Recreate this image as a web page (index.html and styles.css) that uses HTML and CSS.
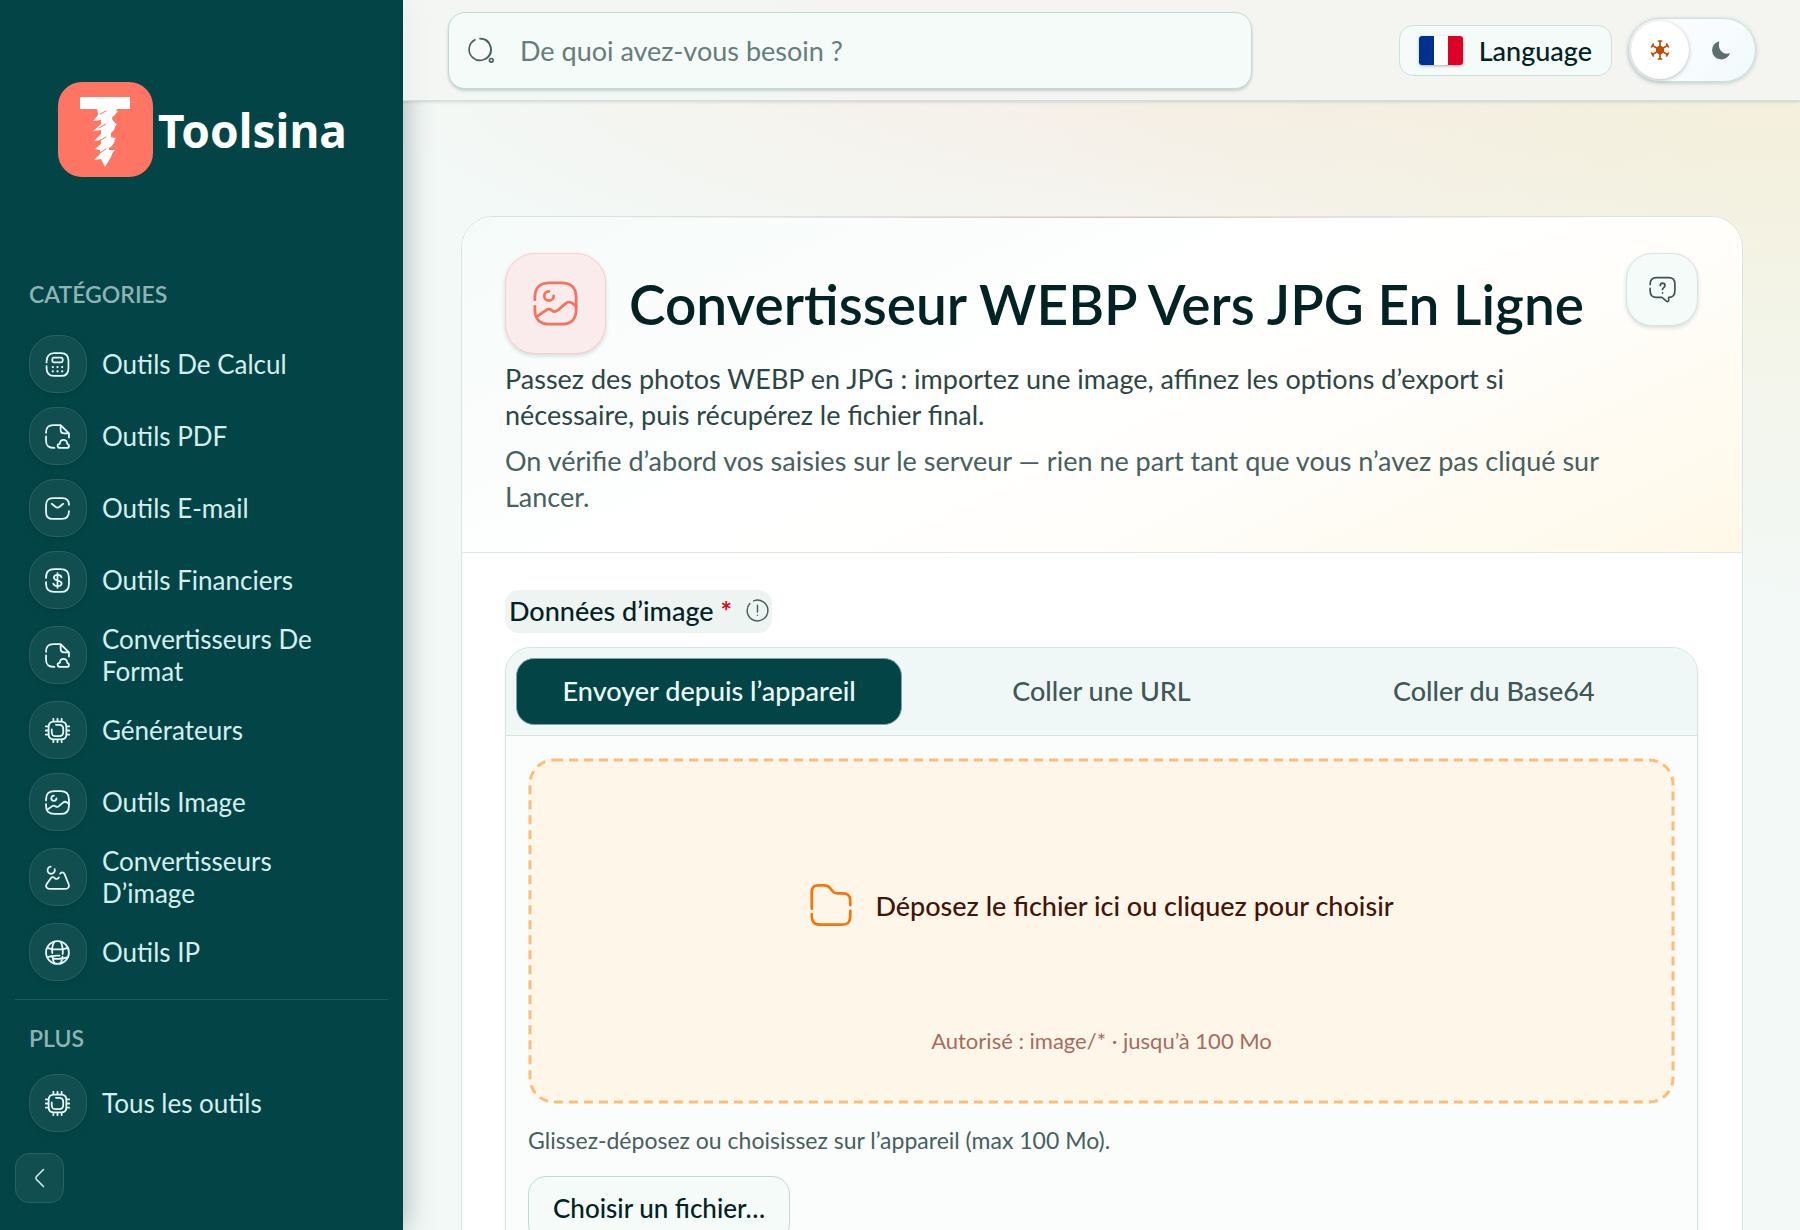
FILE: index.html
```html
<!DOCTYPE html>
<html lang="fr">
<head>
    <meta charset="UTF-8">
    <meta name="viewport" content="width=device-width, initial-scale=1.0">
    <title>Convertisseur WEBP Vers JPG En Ligne - Toolsina</title>
    <link rel="stylesheet" href="styles.css">
</head>
<body>
    <svg class="sprite" aria-hidden="true">
        <symbol id="i-calc" viewBox="0 0 24 24">
            <path d="M1.500 10V9C1.500 4.500 4 1 8.500 1h7c4.500 0 7 3 7 7.500v7c0 4.500-2.500 7.500-7 7.500h-7c-4.500 0-7-3-7-7.500v-2"/>
            <rect x="7" y="5.500" width="10" height="4.500" rx="1.500"/>
            <path stroke-width="2.200" d="M7.500 14.500h.01M12 14.500h.01M16.500 14.500h.01M7.500 18.500h.01M12 18.500h.01M16.500 18.500h.01"/>
        </symbol>
        <symbol id="i-file" viewBox="0 0 24 24">
            <path d="M1 8.500C1 3.500 3 1 8 1h7l8 8v4M15 1v4.500C15 8 16 9 18.500 9H23M1 12v4c0 5 2 7 8 7"/>
            <path d="M14.800 23h6.200c2.500 0 2.800-3.500.300-4-.300-5-7.300-4.800-7 0-3.200 0-2.800 4 .500 4z"/>
        </symbol>
        <symbol id="i-mail" viewBox="0 0 24 24">
            <path d="M23 14.500c0 5-2 7.500-6.500 7.500h-9C3 22 1 19.500 1 15.500V9c0-4.500 2-7 6.500-7h9C21 2 23 4.500 23 8.500M6.500 7.500l3.500 2.800c1.200 1 2.800 1 4 0l3.500-2.800"/>
        </symbol>
        <symbol id="i-money" viewBox="0 0 24 24">
            <path d="M1 9.500C1 3.500 3.500 1 9 1h6c5.500 0 8 2.500 8 8v6c0 5.500-2.500 8-8 8H9c-5.500 0-8-2.500-8-8v-1.500"/>
            <path d="M12 5v14M15.800 9c-.5-3-7.300-3.200-7.300.2 0 3.800 7.500 1.800 7.500 5.600 0 3.500-7.400 3.200-8 .2"/>
        </symbol>
        <symbol id="i-chip" viewBox="0 0 24 24">
            <path d="M8.500 3.500h7c3.500 0 5 1.500 5 5v7c0 3.500-1.500 5-5 5h-7c-3.500 0-5-1.500-5-5v-7c0-3.500 1.500-5 5-5zM8 .8v2.700M12 .8v2.700M16 .8v2.700M8 20.500v2.700M12 20.500v2.700M16 20.500v2.700M.8 8h2.700M.8 12h2.700M.8 16h2.700M20.500 8h2.700M20.500 12h2.700M20.500 16h2.700"/>
            <path d="M10.500 6.500h3c3 0 4 1 4 4v3c0 3-1 4-4 4h-3c-3 0-4-1-4-4V11"/>
        </symbol>
        <symbol id="i-image" viewBox="0 0 24 24">
            <path d="M1 10V9C1 3.500 3.500 1 9 1h6c5.500 0 8 2.500 8 8v6c0 5.500-2.500 8-8 8H9c-5.500 0-8-2.500-8-8v-1.500"/>
            <path d="M8.500 5.500a2.500 2.500 0 1 0 2.500 2.500M2 19l5-3.500c1-.7 2-.6 3 .1 1.200.9 2.300.8 3.300-.1l4-3.400c1.200-1 2.800-1 4 0L23 13.500"/>
        </symbol>
        <symbol id="i-hills" viewBox="0 0 24 24">
            <path d="M5.500 1.500A3.500 3.500 0 1 0 9.300 4"/>
            <path d="M5.800 12.500l-4 5.500C.2 20.500 1.500 23 4.500 23h15c3 0 4.200-2.500 3-5L18.700 8.500c-1-2-3-2-4.200-.2M5.800 12.500c1-1.200 2.500-1 3.500 0 1.500 1.500 3 1 4-.5"/>
        </symbol>
        <symbol id="i-globe" viewBox="0 0 24 24">
            <circle cx="12" cy="12" r="11"/>
            <path d="M9 1.500C7 5 6.500 9 7 12.500M7.200 15.500c.2 2.500.8 5 1.800 7M15 1.500c1.800 3.500 2.300 7.500 2 12M16.800 16c-.3 2.300-.9 4.500-1.800 6.500M2 7.500c5 2 15 2 20 0M2 16.500c4-1.500 8-1.800 12-1.500M22 16.500c-4 1.500-9 2-13 1.500"/>
        </symbol>
    </svg>

    <div class="app">
        <aside class="sidebar">
            <a class="brand" href="#">
                <svg class="brand-mark" viewBox="0 0 95 95" aria-hidden="true">
                    <rect width="95" height="95" rx="24" fill="#ff7564"/>
                    <path fill="#fff" d="M22 15h50v12H59l-1 2-3 3-1 5 4 5-2 6-3 3v5l4 3-3 5-3 2v4l4-1-2 6-6 10-4-8-7 1 6-6v-4l-5-1 6-5v-4l-7 1 7-7v-4l-8 1 8-7v-4l-8 1 5-6 0-2-1-4H22z"/>
                    <path fill="#fff" d="M52 28l8 1-4 5-6 2zM52 41l7 1-5 6-4 1zM51 55l7 1-5 6-4 1zM49 68l8 0-5 6-4 1z"/>
                    <path stroke="#ff7564" stroke-width="1" fill="none" d="M42 32l6-3M41 46l7-4M41 59l7-4M42 71l6-4"/>
                </svg>
                <span>Toolsina</span>
            </a>
            <nav class="nav">
                <h2 class="nav-title">CATÉGORIES</h2>
                <a class="nav-link" href="#"><span class="nav-icon"><svg><use href="#i-calc"/></svg></span>Outils De Calcul</a>
                <a class="nav-link" href="#"><span class="nav-icon"><svg><use href="#i-file"/></svg></span>Outils PDF</a>
                <a class="nav-link" href="#"><span class="nav-icon"><svg><use href="#i-mail"/></svg></span>Outils E-mail</a>
                <a class="nav-link" href="#"><span class="nav-icon"><svg><use href="#i-money"/></svg></span>Outils Financiers</a>
                <a class="nav-link" href="#"><span class="nav-icon"><svg><use href="#i-file"/></svg></span>Convertisseurs De Format</a>
                <a class="nav-link" href="#"><span class="nav-icon"><svg><use href="#i-chip"/></svg></span>Générateurs</a>
                <a class="nav-link" href="#"><span class="nav-icon"><svg><use href="#i-image"/></svg></span>Outils Image</a>
                <a class="nav-link" href="#"><span class="nav-icon"><svg><use href="#i-hills"/></svg></span>Convertisseurs D’image</a>
                <a class="nav-link" href="#"><span class="nav-icon"><svg><use href="#i-globe"/></svg></span>Outils IP</a>
            </nav>
            <nav class="nav nav-more">
                <h2 class="nav-title">PLUS</h2>
                <a class="nav-link" href="#"><span class="nav-icon"><svg><use href="#i-chip"/></svg></span>Tous les outils</a>
            </nav>
            <button class="collapse" type="button" aria-label="Réduire le menu">
                <svg viewBox="0 0 24 24"><path d="M15.500 3.500L8.500 10.500c-.8.800-.8 2.200 0 3l7 7"/></svg>
            </button>
        </aside>

        <div class="main">
            <header class="topbar">
                <label class="search">
                    <svg viewBox="0 0 24 24" aria-hidden="true"><path d="M6.500 2.600A10 10 0 1 0 11 1.500c11 0 13.500 13 6 18.500"/><circle cx="21.500" cy="21.500" r="1.700"/></svg>
                    <input type="search" aria-label="Rechercher un outil" placeholder="De quoi avez-vous besoin ?">
                </label>
                <div class="topbar-actions">
                    <button class="language" type="button">
                        <span class="flag"></span>
                        Language
                    </button>
                    <button class="theme" type="button" aria-label="Changer de thème">
                        <span class="theme-knob">
                            <svg viewBox="0 0 24 24"><circle cx="12" cy="12" r="4"/><path d="M12 12V1.500M12 12v10.500M12 12l9-5.500M12 12L3 6.500M12 12l9 5.500M12 12l-9 5.500M10 1.200h4M10 22.800h4M20 4.800l2 3.500M4 4.800L2 8.300M20 19.200l2-3.500M4 19.200l-2-3.500"/></svg>
                        </span>
                        <span class="theme-moon">
                            <svg viewBox="0 0 24 24"><path d="M10 1.500A11 11 0 1 0 22.800 15.500C16 19 7 12 10 1.500z"/></svg>
                        </span>
                    </button>
                </div>
            </header>

            <main class="content">
                <section class="card">
                    <div class="card-head">
                        <div class="card-title">
                            <span class="tool-icon"><svg><use href="#i-image"/></svg></span>
                            <h1>Convertisseur WEBP Vers JPG En Ligne</h1>
                            <button class="help" type="button" aria-label="Aide">
                                <svg viewBox="0 0 24 24"><path d="M1 7.500C1 3.500 2.500 1.500 6.500 1.500h11c4 0 5.500 2 5.500 5.500v6c0 4-1.500 6-5.500 6v2.500c0 1.300-1 1.500-2 .8L11.500 19h-5C2.500 19 1 17 1 13v-2"/><path d="M10 8.500c0-2.800 4.200-2.800 4.200 0 0 1.800-2.200 1.800-2.200 3.500M12 15h.01"/></svg>
                            </button>
                        </div>
                        <p class="lead">Passez des photos WEBP en JPG : importez une image, affinez les options d’export si nécessaire, puis récupérez le fichier final.</p>
                        <p class="note">On vérifie d’abord vos saisies sur le serveur — rien ne part tant que vous n’avez pas cliqué sur Lancer.</p>
                    </div>

                    <form class="card-body">
                        <label class="field-label" for="file">
                            <span>Données d’image <b>*</b></span>
                            <svg viewBox="0 0 24 24" aria-hidden="true"><path d="M8 2A10.800 10.800 0 1 1 4 4.800M12 6.500v7M12 17h.01"/></svg>
                        </label>
                        <div class="source">
                            <div class="tabs" role="tablist">
                                <button class="tab active" type="button" role="tab" aria-selected="true">Envoyer depuis l’appareil</button>
                                <button class="tab" type="button" role="tab" aria-selected="false">Coller une URL</button>
                                <button class="tab" type="button" role="tab" aria-selected="false">Coller du Base64</button>
                            </div>
                            <div class="panel">
                                <label class="dropzone">
                                    <svg class="drop-border" aria-hidden="true"><rect width="100%" height="100%" rx="24"/></svg>
                                    <input class="visually-hidden" type="file" id="file" accept="image/*">
                                    <span class="drop-main">
                                        <svg viewBox="0 0 24 24" aria-hidden="true"><path d="M1.500 14V5c0-2.500 1-3.700 3.500-3.700h3c2 0 2.500.4 3.700 1.800L13 4.600c.8.900 1.300 1.100 2.500 1.100h3c2.800 0 4 1.300 4 4V12M1.500 17c0 4.500 1.200 5.700 5 5.700h11c3.800 0 5-1.200 5-5.200v-2.300"/></svg>
                                        Déposez le fichier ici ou cliquez pour choisir
                                    </span>
                                    <span class="drop-sub">Autorisé : image/* · jusqu’à 100 Mo</span>
                                </label>
                                <p class="hint">Glissez-déposez ou choisissez sur l’appareil (max 100 Mo).</p>
                                <button class="choose" type="button">Choisir un fichier…</button>
                            </div>
                        </div>
                    </form>
                </section>
            </main>
        </div>
    </div>
</body>
</html>
```
FILE: styles.css
```css
* {
    box-sizing: border-box;
}

body {
    margin: 0;
    font-family: Lato, sans-serif;
    font-size: 26px;
    color: #032223;
    background-color: #f3faf8;
}

h1, h2, p {
    margin: 0;
}

button, input {
    font: inherit;
    color: inherit;
}

button {
    cursor: pointer;
}

svg {
    fill: none;
    stroke: currentColor;
    stroke-width: 1.5;
    stroke-linecap: round;
    stroke-linejoin: round;
}

.sprite {
    display: none;
}

.visually-hidden {
    position: absolute;
    width: 1px;
    height: 1px;
    opacity: 0;
}

.app {
    display: flex;
    height: 100vh;
    overflow: hidden;
}

/* Sidebar */
.sidebar {
    flex: 0 0 403px;
    padding: 82px 15px 0;
    background-color: #034546;
    color: #d5eef0;
    box-shadow: 0 0 30px rgba(3, 34, 35, 0.35);
    z-index: 1;
}

.brand {
    display: flex;
    align-items: center;
    gap: 5px;
    padding-left: 43px;
    margin-bottom: 103px;
    color: #fff;
    font-family: "Noto Sans", sans-serif;
    font-size: 46px;
    font-weight: 700;
    text-decoration: none;
}

.brand-mark {
    width: 95px;
    height: 95px;
    stroke: none;
}

.nav {
    display: flex;
    flex-direction: column;
    gap: 2px;
}

.nav-title {
    padding: 0 14px;
    margin-bottom: 19px;
    font-size: 23px;
    font-weight: 600;
    line-height: 28px;
    color: #8fb3b5;
}

.nav-link {
    display: flex;
    align-items: center;
    gap: 15px;
    padding: 6px 40px 6px 14px;
    line-height: 32px;
    color: inherit;
    text-decoration: none;
}

.nav-icon {
    display: flex;
    flex: 0 0 58px;
    height: 58px;
    padding-right: 2px;
    align-items: center;
    justify-content: center;
    border: 1px solid #296264;
    border-radius: 26px;
    background-color: #114e50;
    box-shadow: 0 2px 6px rgba(0, 0, 0, 0.12);
    color: #e8fbfb;
}

.nav-icon svg {
    width: 25px;
    height: 25px;
    stroke-width: 1.7;
}

.nav-more {
    margin-top: 12px;
    padding-top: 24px;
    border-top: 1px solid #1d5a5b;
}

.nav-more .nav-title {
    margin-bottom: 14px;
}

.collapse {
    display: flex;
    width: 49px;
    height: 50px;
    margin-top: 15px;
    padding: 0;
    align-items: center;
    justify-content: center;
    border: 1px solid #296264;
    border-radius: 14px;
    background-color: #114e50;
}

.collapse svg {
    width: 24px;
    height: 24px;
}

/* Top bar */
.main {
    flex: 1;
    min-width: 0;
    background:
        radial-gradient(ellipse 55% 45% at 100% 5%, rgba(243, 239, 216, 0.9), transparent),
        radial-gradient(ellipse 65% 22% at 60% 4%, rgba(248, 231, 220, 0.75), transparent),
        #f3f9f7;
}

.topbar {
    position: relative;
    z-index: 2;
    display: flex;
    height: 101px;
    padding: 0 44px 0 45px;
    align-items: center;
    justify-content: space-between;
    border-bottom: 1px solid #cfe1dc;
    background-color: rgba(243, 246, 243, 0.85);
    box-shadow: 0 1px 3px rgba(3, 34, 35, 0.15);
}

.search {
    display: flex;
    flex: 0 1 804px;
    height: 77px;
    padding: 0 20px 0 19px;
    align-items: center;
    gap: 26px;
    border: 1px solid #bfdcd4;
    border-radius: 17px;
    background-color: #f4fbf9;
    box-shadow: 0 2px 3px rgba(3, 69, 70, 0.2);
}

.search svg {
    flex: none;
    width: 26px;
    height: 26px;
    color: #47605e;
}

.search input {
    flex: 1;
    min-width: 0;
    padding: 0;
    border: 0;
    outline: 0;
    background: none;
    font-size: 27px;
}

.search input::placeholder {
    color: #667d7b;
    opacity: 1;
}

.topbar-actions {
    display: flex;
    align-items: center;
    gap: 16px;
}

.language {
    display: flex;
    height: 51px;
    padding: 0 19px;
    align-items: center;
    gap: 16px;
    border: 1px solid #c9e2dc;
    border-radius: 14px;
    background-color: #f4fbf9;
    font-size: 27px;
    font-weight: 500;
}

.flag {
    width: 44px;
    height: 29px;
    border-radius: 3px;
    background: linear-gradient(90deg, #00318f 33.3%, #fff 33.3% 66.6%, #dd0027 66.6%);
    box-shadow: 0 1px 3px rgba(0, 0, 0, 0.3);
}

.theme {
    display: flex;
    width: 128px;
    height: 64px;
    padding: 2px;
    align-items: center;
    border: 1px solid #c9e2dc;
    border-radius: 32px;
    background: linear-gradient(135deg, #fff, #f1f9fc);
    box-shadow: 0 1px 4px rgba(3, 69, 70, 0.25);
}

.theme-knob {
    display: flex;
    width: 58px;
    height: 58px;
    align-items: center;
    justify-content: center;
    border-radius: 50%;
    background-color: #fff;
    box-shadow: 0 1px 4px rgba(0, 0, 0, 0.25);
    color: #b94e0c;
}

.theme-knob svg {
    width: 20px;
    height: 20px;
    stroke-width: 2;
}

.theme-knob circle {
    fill: currentColor;
}

.theme-moon {
    display: flex;
    flex: 1;
    justify-content: center;
    color: #5b6e70;
}

.theme-moon svg {
    width: 20px;
    height: 20px;
    fill: currentColor;
    stroke: none;
}

/* Tool card */
.content {
    padding: 115px 57px 0 58px;
}

.card {
    border: 1px solid #d6e6e2;
    border-radius: 32px;
    background-color: #fff;
    overflow: hidden;
}

.card-head {
    padding: 36px 44px 37px 43px;
    border-bottom: 1px solid #dfe8e3;
    background:
        linear-gradient(90deg, transparent 10%, #f5b9b0 50%, transparent 90%) top / 100% 1px no-repeat,
        linear-gradient(155deg, #f5fbf9 0%, #fff 45%, #fffefb 65%, #fff8e8 100%);
}

.card-title {
    display: flex;
    align-items: center;
    gap: 23px;
    margin-bottom: 7px;
}

.tool-icon {
    display: flex;
    flex: 0 0 101px;
    height: 101px;
    align-items: center;
    justify-content: center;
    border: 1px solid #f8cfcd;
    border-radius: 30px;
    background-color: #faecec;
    box-shadow: 0 2px 4px rgba(3, 34, 35, 0.15);
    color: #f4735f;
}

.tool-icon svg {
    width: 45px;
    height: 45px;
}

h1 {
    flex: 1;
    font-size: 55px;
    font-weight: 600;
    line-height: 68px;
}

.help {
    display: flex;
    width: 72px;
    height: 73px;
    padding: 0;
    align-self: flex-start;
    align-items: center;
    justify-content: center;
    border: 1px solid #d3e6e1;
    border-radius: 26px;
    background-color: #f4fbf9;
    box-shadow: 0 2px 4px rgba(3, 34, 35, 0.15);
    color: #3c5553;
}

.help svg {
    width: 27px;
    height: 27px;
}

.lead,
.note {
    max-width: 1110px;
    font-size: 27px;
    line-height: 36px;
    color: #2d4644;
}

.note {
    margin-top: 10px;
    color: #47605e;
}

.card-body {
    padding: 37px 44px 44px 43px;
}

.field-label {
    display: inline-flex;
    height: 43px;
    padding: 0 3px 2px 4px;
    align-items: center;
    gap: 14px;
    border-radius: 14px;
    background-color: #eef4f2;
    font-size: 27px;
    font-weight: 500;
}

.field-label b {
    color: #dc0412;
}

.field-label svg {
    width: 23px;
    height: 23px;
    color: #47605e;
}

.source {
    margin-top: 14px;
    border: 1px solid #d3e6e1;
    border-radius: 26px;
    background-color: #fafdfc;
    box-shadow: 0 1px 3px rgba(3, 34, 35, 0.08);
    overflow: hidden;
}

.tabs {
    display: grid;
    grid-template-columns: repeat(3, 1fr);
    gap: 6px;
    padding: 10px;
    border-bottom: 1px solid #d6e4e1;
    background-color: #f0f8f7;
}

.tab {
    height: 67px;
    padding: 0 12px 2px;
    border: 1px solid transparent;
    border-radius: 18px;
    background: none;
    color: #3f5856;
    font-size: 27px;
    font-weight: 500;
}

.tab.active {
    border-color: #7fa3a4;
    background-color: #034546;
    color: #eefcfc;
}

.panel {
    padding: 22px;
}

.dropzone {
    position: relative;
    display: grid;
    height: 346px;
    padding: 27px 27px 47px;
    grid-template-rows: 1fr 32px;
    justify-items: center;
    border-radius: 26px;
    background-color: #fff6ea;
    cursor: pointer;
}

/* longer dashes than a plain dashed border gives */
.drop-border {
    position: absolute;
    top: 2px;
    left: 2px;
    width: calc(100% - 4px);
    height: calc(100% - 4px);
    overflow: visible;
    color: #f8bf7c;
    stroke-width: 3;
    stroke-dasharray: 9 6;
    stroke-linecap: butt;
}

.drop-main {
    display: flex;
    align-items: center;
    gap: 22px;
    color: #431407;
    font-size: 27px;
    font-weight: 500;
}

.drop-main svg {
    width: 44px;
    height: 44px;
    color: #f5760e;
}

.drop-sub {
    font-size: 22px;
    line-height: 32px;
    color: #a66c5c;
}

.hint {
    margin: 20px 0;
    font-size: 23px;
    line-height: 32px;
    color: #47605e;
}

.choose {
    height: 66px;
    padding: 0 24px 2px;
    border: 1px solid #bfdcd4;
    border-radius: 18px;
    background-color: #f4fbf9;
    font-weight: 500;
}
```
